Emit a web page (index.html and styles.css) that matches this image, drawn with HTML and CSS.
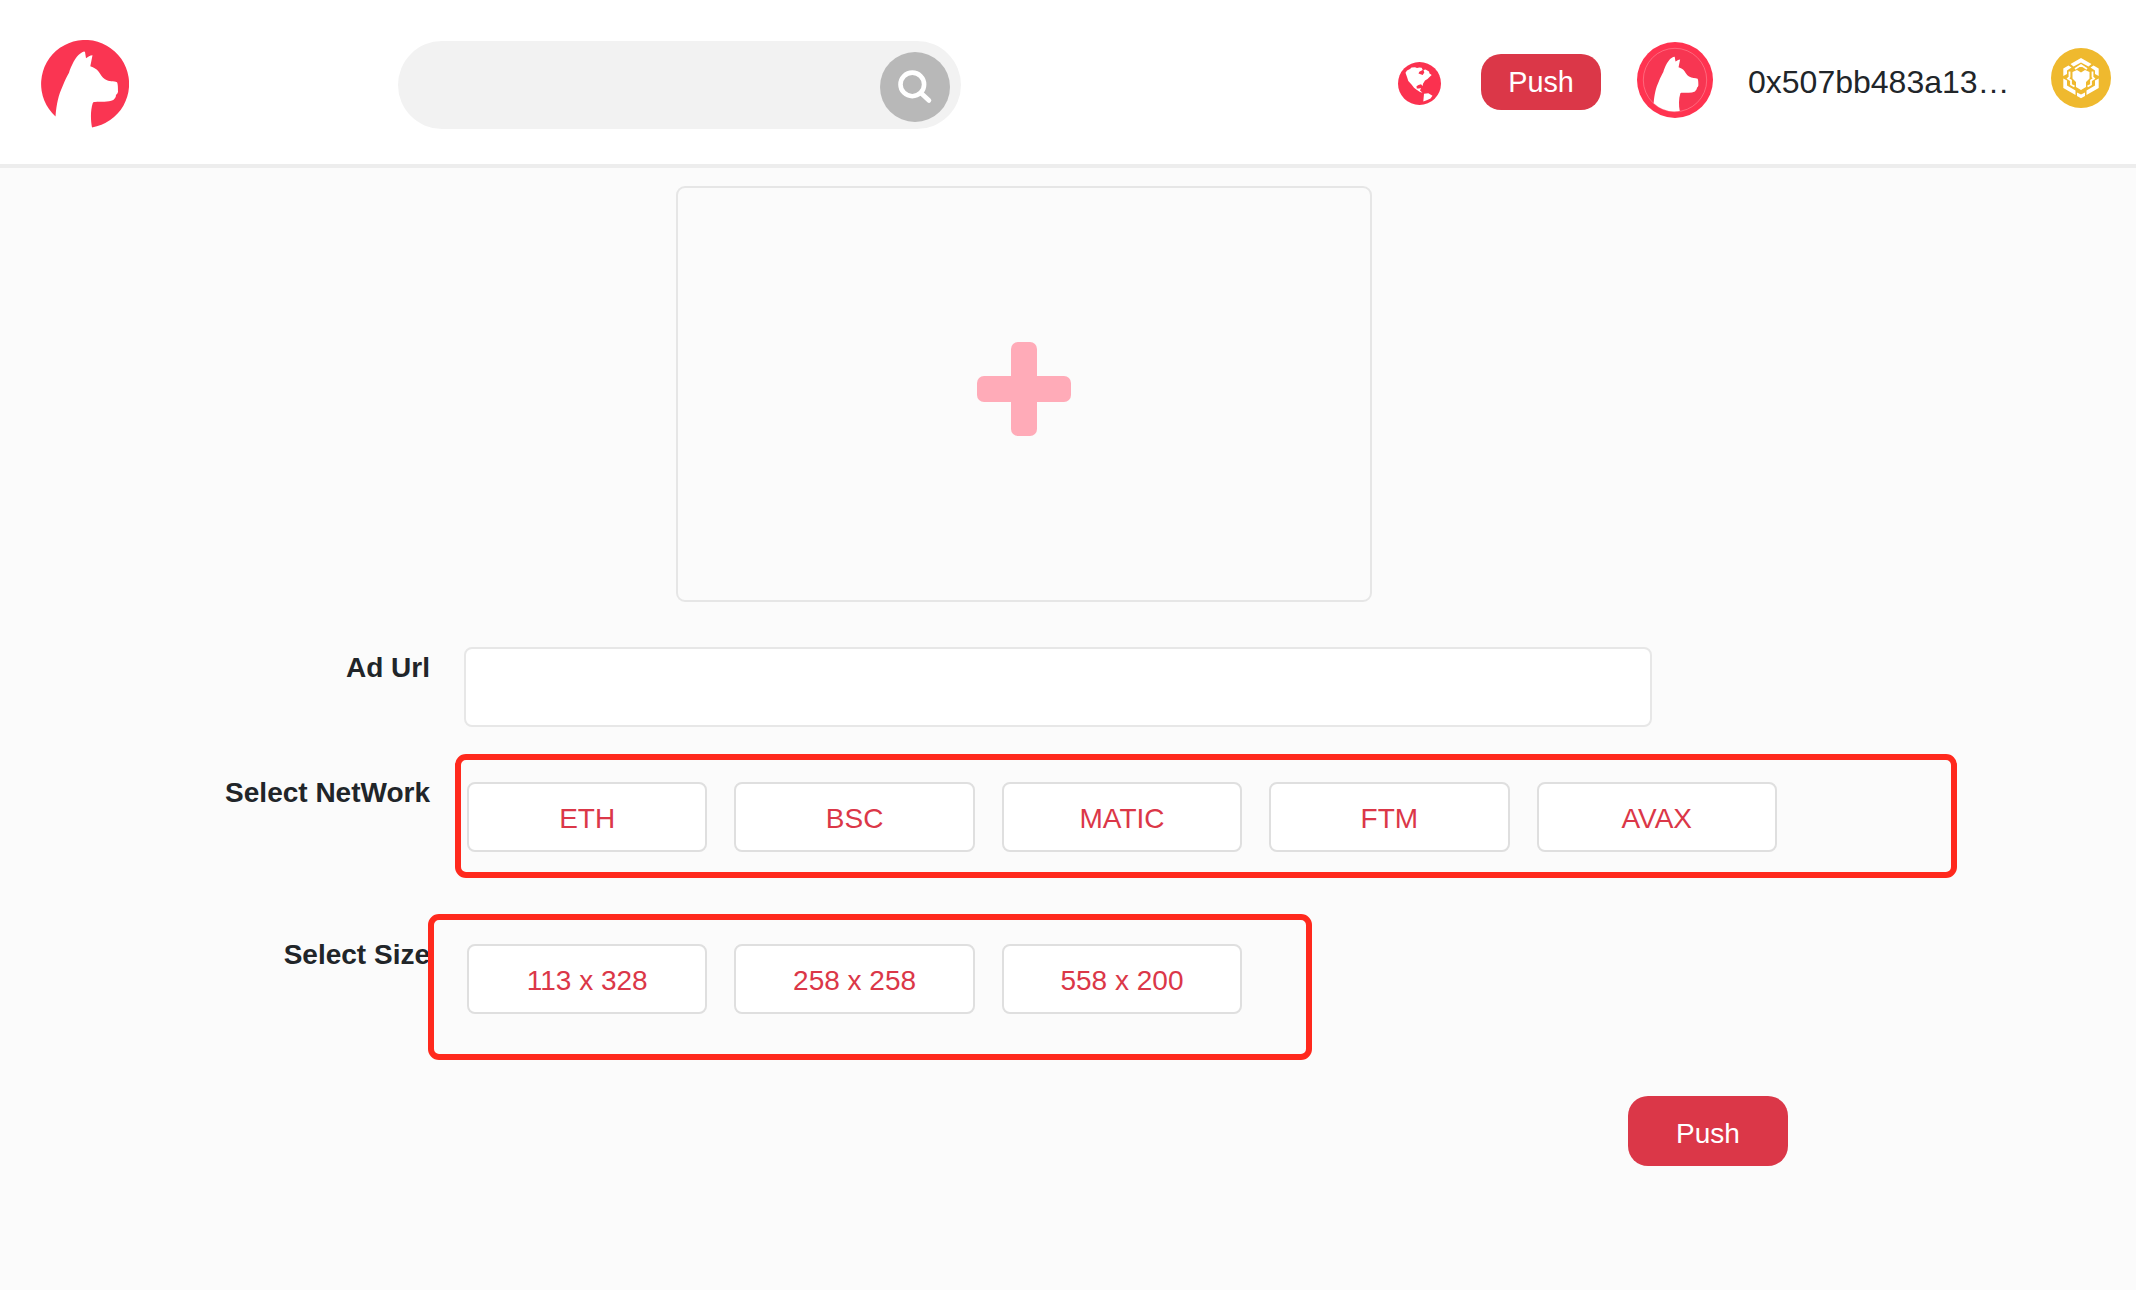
FILE: index.html
```
<!DOCTYPE html>
<html lang="en">
<head>
<meta charset="utf-8">
<title>Push Ad</title>
<link rel="stylesheet" href="styles.css">
</head>
<body>
<header class="header">
  <svg class="logo" viewBox="0 0 88 88">
    <path fill="#fa3552" d="M14.500 76.500C15.500 64 17.500 55 21.700 46C24 40 26 36.500 28 32.700C30 26 35 16 39 13.700C41 12 43.500 10.500 44 12L45 18.300C47 17 49 15.500 51.500 15.300L49.300 26.300C53 27.500 55.500 29 57.700 31.700C60 35 61 37.500 64 39.300C68 42 73 41 76 42.300C77 44 77 49 77 51.700C76.500 53.500 76 54 75 55C75 57.500 73.500 58.500 72.300 60C67 62.500 60 61.500 54 62C52.500 62 52 62.500 51.700 63.300C49.500 70 49.500 80 51 87.400A44 44 0 1 0 14.500 76.500Z"/>
  </svg>
  <div class="search">
    <button class="search-button" aria-label="Search">
      <svg class="search-icon" viewBox="0 0 70 70"><circle cx="32.300" cy="32.400" r="11.800"/><path d="M41.500 41.500L49 48.500"/></svg>
    </button>
  </div>
  <svg class="globe" viewBox="0 0 43 43">
    <circle cx="21.500" cy="21.500" r="21.500" fill="#fb314f"/>
    <path fill="#fff" d="M7.500 10.800L9 8.500L12 7L13.500 5.500L17 5.200L19 6L21.300 5.500L23.700 5.800L24.700 8L21.300 9.800L20.500 11.500L24.700 13L26.300 10.500L25.500 8L27.500 7.500L31 9.500L31.500 11.500L33.700 13L31 15.500L29.500 17L27 18.500L25 21.800L24.700 24L23 22.300L20.500 23L18.500 24.200L18.800 26.500L21 26.500L23 26L22 28.500L24.500 30.800L22 30L19 28L16 25.700L13.500 22.500L10.300 19L9 15ZM26 31.800L30.300 31.300L34.500 33.800L32.500 36.500L29.300 38L25.300 39.500Z"/>
  </svg>
  <button class="push push-top">Push</button>
  <svg class="avatar" viewBox="0 0 76 76">
    <circle cx="38" cy="38" r="38" fill="#ff3350"/>
    <circle cx="38" cy="38" r="31.700" fill="#f73652" stroke="#ff8b9b" stroke-width=".6"/>
    <path transform="translate(6.300 6.500) scale(.715)" fill="#fff" d="M14.500 76.500C15.500 64 17.500 55 21.700 46C24 40 26 36.500 28 32.700C30 26 35 16 39 13.700C41 12 43.500 10.500 44 12L45 18.300C47 17 49 15.500 51.500 15.300L49.300 26.300C53 27.500 55.500 29 57.700 31.700C60 35 61 37.500 64 39.300C68 42 73 41 76 42.300C77 44 77 49 77 51.700C76.500 53.500 76 54 75 55C75 57.500 73.500 58.500 72.300 60C67 62.500 60 61.500 54 62C52.500 62 52 62.500 51.700 63.300C49.500 70 49.500 80 51 87.400A44 44 0 0 1 14.500 76.500Z"/>
  </svg>
  <span class="address">0x507bb483a13…</span>
  <svg class="chain" viewBox="0 0 60 60">
    <circle cx="30" cy="30" r="30" fill="#efb92e"/>
    <!-- cube outline, joined by short inner links -->
    <path fill="#fff" d="M30 10L40.500 16L37.500 18.500L30 14.500L22.500 18.500L19.500 16ZM12.300 20.500L17.500 17.500L20.500 19.500L16 22.500V26L12.300 28ZM47.700 20.500L42.500 17.500L39.500 19.500L44 22.500V26L47.700 28ZM12.300 30.500L16 32.500V37.500L24.500 42.500V47L12.300 40ZM47.700 30.500L44 32.500V37.500L35.500 42.500V47L47.700 40ZM26 44.500L30 46.500L34 44.500V48L30 50.300L26 48Z"/>
    <path fill="none" stroke="#fff" stroke-width="1.800" d="M24 21L30 17L36 21M18.500 23.500V29L17 30.500L20 32.500V36.500L23.500 38.500M41.500 23.500V29L43 30.500L40 32.500V36.500L36.500 38.500"/>
    <path fill="#fff" d="M21.500 24L26 22L30 24.500L34 22L38.500 24V30.500L35 34V39L30 42L25 39V34L21.500 30.500Z"/>
  </svg>
</header>
<main class="form">
  <div class="upload"><span class="plus"></span></div>
  <div class="row row-url"><label class="label" for="url">Ad Url</label><input class="input" id="url"></div>
  <div class="row row-network">
    <span class="label">Select NetWork</span>
    <div class="options">
      <button class="option">ETH</button>
      <button class="option">BSC</button>
      <button class="option">MATIC</button>
      <button class="option">FTM</button>
      <button class="option">AVAX</button>
    </div>
    <span class="mark mark-network"></span>
  </div>
  <div class="row row-size">
    <span class="label">Select Size</span>
    <div class="options">
      <button class="option">113 x 328</button>
      <button class="option">258 x 258</button>
      <button class="option">558 x 200</button>
    </div>
    <span class="mark mark-size"></span>
  </div>
  <button class="push push-submit">Push</button>
</main>
</body>
</html>
```
FILE: styles.css
```
* { box-sizing: border-box; }
body {
  margin: 0;
  background: #fbfbfb;
  color: #212529;
  font-family: "Liberation Sans", Arial, sans-serif;
  font-size: 28px;
  line-height: 32px;
}
button, input { font: inherit; margin: 0; padding: 0; border: 0; }
svg { display: block; flex: none; }

.header {
  display: flex;
  align-items: flex-start;
  height: 168px;
  padding-left: 41px;
  background: #fff;
  border-bottom: 4px solid #ededed;
}
.logo { width: 88px; height: 88px; margin-top: 40px; }
.search {
  display: flex;
  justify-content: flex-end;
  width: 563px;
  height: 88px;
  margin: 41px 0 0 269px;
  padding: 11px 11px 0 0;
  border-radius: 44px;
  background: #f2f2f2;
}
.search-button { width: 70px; height: 70px; border-radius: 50%; background: #b8b8b8; }
.search-icon { width: 70px; height: 70px; fill: none; stroke: #fff; stroke-width: 4.6; stroke-linecap: round; }
.globe { width: 43px; height: 43px; margin: 62px 0 0 437px; }
.push { background: #db3748; color: #fff; border-radius: 20px; }
.push-top { width: 120px; height: 56px; margin: 54px 0 0 40px; font-size: 28.8px; }
.avatar { width: 76px; height: 76px; margin: 42px 0 0 36px; }
.address { width: 266px; margin: 64px 0 0 35px; font-size: 32px; line-height: 36px; white-space: nowrap; }
.chain { width: 60px; height: 60px; margin: 48px 0 0 37px; }

.form { display: flex; flex-direction: column; }
.upload {
  display: grid;
  place-items: center;
  width: 696px;
  height: 416px;
  margin: 18px 0 0 676px;
  border: 2px solid #e6e6e6;
  border-radius: 9px;
}
.plus { display: grid; width: 94px; height: 94px; margin-top: -10px; }
.plus::before, .plus::after {
  content: "";
  grid-area: 1 / 1;
  place-self: center;
  width: 94px;
  height: 26px;
  border-radius: 7px;
  background: #ffabb8;
}
.plus::after { width: 26px; height: 94px; }

.row { display: flex; align-items: flex-start; position: relative; }
.row-url { margin-top: 45px; }
.row-network { margin-top: 55px; }
.row-size { margin-top: 92px; }
.label { width: 430px; margin-top: -5px; text-align: right; font-weight: bold; }
.row-url .label { margin-top: 5px; }
.input {
  width: 1188px;
  height: 80px;
  margin-left: 34px;
  border: 2px solid #e7e7e7;
  border-radius: 8px;
  background: #fff;
}
.options { display: flex; gap: 27px; margin-left: 37px; }
.option {
  width: 240.4px;
  height: 70px;
  padding-top: 3px;
  border: 2px solid #dfdfdf;
  border-radius: 8px;
  background: #fff;
  color: #db3748;
}
/* Highlight frames drawn over the option rows */
.mark { position: absolute; border: 6px solid #ff291d; border-radius: 11px; }
.mark-network { left: 455px; top: -28px; width: 1502px; height: 124px; }
.mark-size { left: 428px; top: -30px; width: 884px; height: 146px; }
.push-submit { width: 160px; height: 70px; margin: 82px 0 0 1628px; padding-top: 6px; }
```
